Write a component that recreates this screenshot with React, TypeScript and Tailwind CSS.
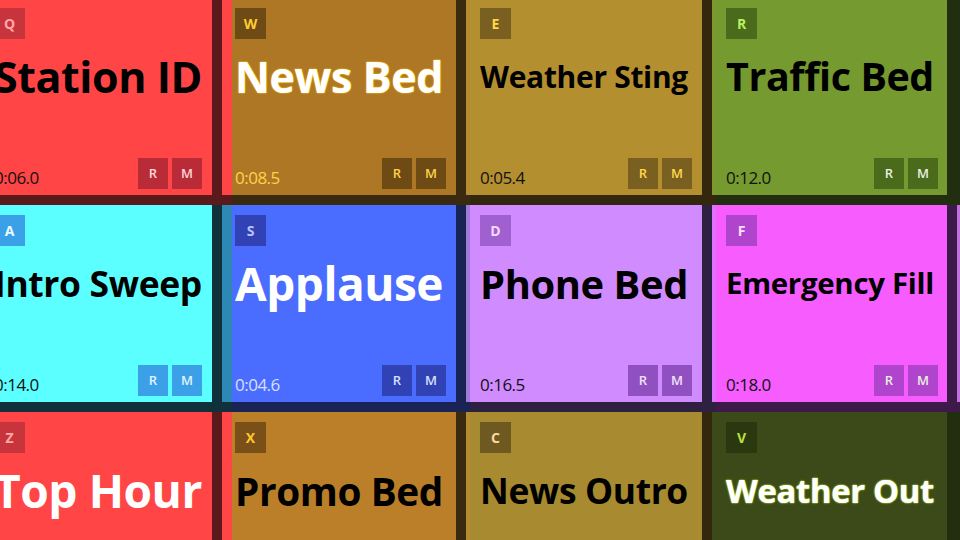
import { useLayoutEffect, useRef, useState } from "react";

type Tile = {
  k: string;
  title: string;
  time: string;
  bg: string;
  dark: string;
  strip: string;
  badge: string;
  titleCls: string;
  timeCls: string;
  btn: string;
};

const rows: Tile[][] = [
  [
    { k: "Q", title: "Station ID", time: "0:06.0", bg: "bg-[#ff4545]", dark: "bg-[#5a1a1c]", strip: "bg-[#ff4545]", badge: "bg-[#c8343c] text-[#ffa8a8]", titleCls: "text-black", timeCls: "text-[#111]", btn: "bg-[#b92c37] text-[#ffd6d6]" },
    { k: "W", title: "News Bed", time: "0:08.5", bg: "bg-[#ad7726]", dark: "bg-[#3a2a10]", strip: "bg-[#b58a30]", badge: "bg-[#6e4a14] text-[#ffcc33]", titleCls: "text-white [text-shadow:0_0_2px_#ffc400,0_0_1px_#ffc400]", timeCls: "text-[#ffd24a]", btn: "bg-[#6e4a14] text-[#ffd24a]" },
    { k: "E", title: "Weather Sting", time: "0:05.4", bg: "bg-[#b38f30]", dark: "bg-[#33280e]", strip: "bg-[#7a9a30]", badge: "bg-[#7a6020] text-[#ffd84a]", titleCls: "text-black", timeCls: "text-[#111]", btn: "bg-[#7a6020] text-[#ffd84a]" },
    { k: "R", title: "Traffic Bed", time: "0:12.0", bg: "bg-[#759a30]", dark: "bg-[#222e10]", strip: "bg-[#222e10]", badge: "bg-[#4a6a1c] text-[#b8f060]", titleCls: "text-black", timeCls: "text-[#111]", btn: "bg-[#4a6a1c] text-[#e8f0e0]" },
  ],
  [
    { k: "A", title: "Intro Sweep", time: "0:14.0", bg: "bg-[#5cffff]", dark: "bg-[#10303c]", strip: "bg-[#2d88b6]", badge: "bg-[#3ca0e8] text-[#e8faff]", titleCls: "text-black", timeCls: "text-[#111]", btn: "bg-[#3ca0e8] text-[#e0f4ff]" },
    { k: "S", title: "Applause", time: "0:04.6", bg: "bg-[#4a6cff]", dark: "bg-[#1a2454]", strip: "bg-[#a07ad8]", badge: "bg-[#3042b4] text-[#b8c4ff]", titleCls: "text-white", timeCls: "text-[#d8e0ff]", btn: "bg-[#3042b4] text-[#d8e0ff]" },
    { k: "D", title: "Phone Bed", time: "0:16.5", bg: "bg-[#d08cff]", dark: "bg-[#2e2040]", strip: "bg-[#e070ff]", badge: "bg-[#a060d0] text-[#f4d8ff]", titleCls: "text-black", timeCls: "text-[#111]", btn: "bg-[#9050c0] text-[#f0e0ff]" },
    { k: "F", title: "Emergency Fill", time: "0:18.0", bg: "bg-[#f75cff]", dark: "bg-[#3e1a4a]", strip: "bg-[#c070e0]", badge: "bg-[#b044cc] text-[#ffe0ff]", titleCls: "text-black", timeCls: "text-[#111]", btn: "bg-[#b044cc] text-[#e8f0e0]" },
  ],
  [
    { k: "Z", title: "Top Hour", time: "0:09.0", bg: "bg-[#ff4545]", dark: "bg-[#5a1a1c]", strip: "bg-[#ff4545]", badge: "bg-[#c8343c] text-[#ffa8a8]", titleCls: "text-white", timeCls: "text-[#111]", btn: "bg-[#b92c37] text-[#ffd6d6]" },
    { k: "X", title: "Promo Bed", time: "0:20.0", bg: "bg-[#ba7f28]", dark: "bg-[#3a2a10]", strip: "bg-[#b58a30]", badge: "bg-[#7a5018] text-[#ffc830]", titleCls: "text-black", timeCls: "text-[#111]", btn: "bg-[#7a5018] text-[#ffc830]" },
    { k: "C", title: "News Outro", time: "0:07.2", bg: "bg-[#a88a30]", dark: "bg-[#33280e]", strip: "bg-[#3b4a18]", badge: "bg-[#6e5a20] text-[#ffd8a0]", titleCls: "text-black", timeCls: "text-[#111]", btn: "bg-[#6e5a20] text-[#ffd8a0]" },
    { k: "V", title: "Weather Out", time: "0:10.0", bg: "bg-[#3b4a18]", dark: "bg-[#222e10]", strip: "bg-[#222e10]", badge: "bg-[#2a3810] text-[#b8e040]", titleCls: "text-white [text-shadow:0_0_2px_#c8f040,0_0_1px_#c8f040]", timeCls: "text-[#e0f0c0]", btn: "bg-[#2a3810] text-[#d8f0a0]" },
  ],
];

const cols = [
  { content: "w-[230px] pl-[12px] pr-[10px]", strip: "w-[10px]" },
  { content: "w-[224px] pl-[3px] pr-[10px]", strip: "w-[4px]" },
  { content: "w-[232px] pl-[10px] pr-[10px]", strip: "w-[4px]" },
  { content: "w-[231px] pl-[10px] pr-[9px]", strip: "w-[4px]" },
];

function FitTitle({ text, cls }: { text: string; cls: string }) {
  const ref = useRef<HTMLSpanElement>(null);
  const [size, setSize] = useState(40);
  useLayoutEffect(() => {
    const measure = () => {
      const el = ref.current;
      if (!el) return;
      const prev = el.style.fontSize;
      el.style.fontSize = "100px";
      const w = el.getBoundingClientRect().width;
      el.style.fontSize = prev;
      if (w > 0) setSize((100 * 208) / w);
    };
    measure();
    if (document.fonts) document.fonts.ready.then(measure);
  }, [text]);
  return (
    <span
      ref={ref}
      className={`whitespace-nowrap font-bold leading-none font-['Open_Sans',sans-serif] tracking-[-0.01em] ${cls}`}
      style={{ fontSize: size }}
    >
      {text}
    </span>
  );
}

function Cell({ t, c }: { t: Tile; c: (typeof cols)[number] }) {
  return (
    <div className="flex flex-col shrink-0">
      <div className="flex h-[197px]">
        <div className={`flex flex-col pt-[10px] pb-[6px] ${c.content} ${t.bg}`}>
          <div className="flex">
            <div className={`h-[31px] min-w-[31px] px-[8px] flex items-center justify-center text-[14px] font-bold font-['Open_Sans',sans-serif] ${t.badge}`}>
              {t.k}
            </div>
          </div>
          <div className="h-[60px] mt-[8px] flex items-center">
            <FitTitle text={t.title} cls={t.titleCls} />
          </div>
          <div className="flex-1" />
          <div className="flex items-end justify-between">
            <span className={`text-[17px] leading-none mb-[3px] tracking-[-0.03em] font-['Open_Sans',sans-serif] ${t.timeCls}`}>
              {t.time}
            </span>
            <div className="flex gap-[4px]">
              <div className={`w-[30px] h-[31px] flex items-center justify-center text-[13px] font-semibold font-['Open_Sans',sans-serif] ${t.btn}`}>R</div>
              <div className={`w-[30px] h-[31px] flex items-center justify-center text-[13px] font-semibold font-['Open_Sans',sans-serif] ${t.btn}`}>M</div>
            </div>
          </div>
        </div>
        <div className={`w-[10px] ${t.dark}`} />
        <div className={`${c.strip} ${t.strip}`} />
      </div>
      <div className={`h-[10px] ${t.dark}`} />
    </div>
  );
}

export default function App() {
  return (
    <div className="w-[960px] h-[540px] overflow-hidden bg-[#1c1c1c]">
      <div className="flex flex-col ml-[-18px] mt-[-2px]">
        {rows.map((row, ri) => (
          <div key={ri} className="flex">
            {row.map((t, ci) => (
              <Cell key={t.k} t={t} c={cols[ci]} />
            ))}
          </div>
        ))}
      </div>
    </div>
  );
}
